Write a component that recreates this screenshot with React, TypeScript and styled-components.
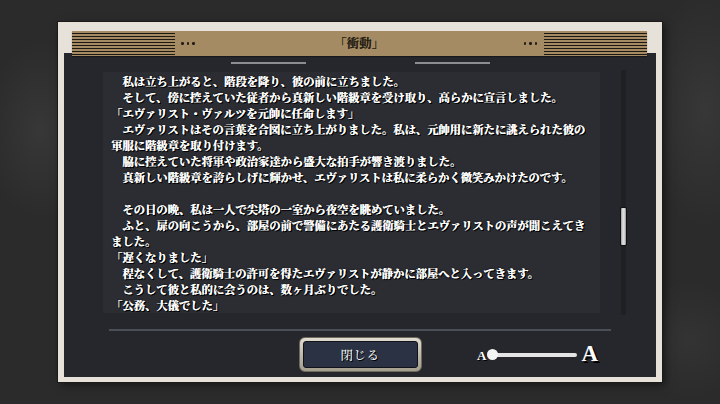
import React from "react";
import styled, { createGlobalStyle } from "styled-components";

const GlobalStyle = createGlobalStyle`
  html, body { margin: 0; padding: 0; width: 720px; height: 404px; overflow: hidden; background: #2a2a2a; }
  #root { width: 720px; height: 404px; }
`;

const jp = `"Noto Serif CJK JP", "Noto Sans CJK JP", "Noto Sans CJK SC", sans-serif`;

const Stage = styled.div`
  width: 720px;
  height: 404px;
  box-sizing: border-box;
  padding: 22px 0 0 58px;
  background:
    radial-gradient(ellipse 55px 90px at 40px 130px, rgba(255,255,255,0.06), transparent),
    radial-gradient(ellipse 60px 120px at 705px 110px, rgba(255,255,255,0.06), transparent),
    radial-gradient(ellipse 60px 60px at 690px 340px, rgba(255,255,255,0.04), transparent),
    #2b2b2b;
`;

const Frame = styled.div`
  width: 604px;
  height: 360px;
  box-sizing: border-box;
  background: #e6e1d9;
  padding: 9px 6px 5px 6px;
  display: flex;
  flex-direction: column;
  box-shadow: 0 0 0 1px #1a1a1a, 3px 3px 8px rgba(0, 0, 0, 0.5);
`;

const HeaderBar = styled.div`
  position: relative;
  z-index: 1;
  margin: 0 9px -3px 8px;
  height: 25px;
  background: #a48b63;
  display: flex;
  align-items: center;
  box-shadow: 0 1px 1px rgba(0, 0, 0, 0.35);
`;

const Stripes = styled.div`
  width: 103px;
  align-self: stretch;
  background: repeating-linear-gradient(to bottom, transparent 0 1.6px, #1d1912 1.6px 3px);
`;

const Dots = styled.div<{ $side: "left" | "right" }>`
  display: flex;
  gap: 3px;
  margin: ${(p) => (p.$side === "left" ? "0 0 0 6px" : "0 7px 0 0")};
`;

const Dot = styled.span`
  width: 2.5px;
  height: 2.5px;
  border-radius: 50%;
  background: #231d13;
`;

const Title = styled.div`
  flex: 1;
  text-align: center;
  font-family: ${jp};
  font-size: 12.5px;
  font-weight: 600;
  color: #241e12;
  line-height: 25px;
  text-shadow: 0.3px 0 0 #241e12;
`;

const Panel = styled.div`
  flex: 1;
  background: #26272c;
  display: flex;
  flex-direction: column;
`;

const Tabs = styled.div`
  display: flex;
  justify-content: center;
  gap: 109px;
  margin-top: 9px;
  height: 2px;
`;

const TabLine = styled.div`
  width: 75px;
  height: 1.5px;
  background: #8b8d90;
`;

const Body = styled.div`
  display: flex;
  align-items: flex-start;
  margin-top: 8px;
  padding-left: 39px;
  height: 241px;
`;

const TextBox = styled.div`
  width: 497px;
  height: 241px;
  box-sizing: border-box;
  background: #2c2d32;
  overflow: hidden;
  padding: 1px 0 0 8px;
  font-family: ${jp};
  font-size: 11.3px;
  font-weight: 700;
  line-height: 16px;
  color: #ffffff;
  white-space: pre;
  text-shadow: 0.4px 0 0 #fff, 1px 1px 0 #000, 1.4px 1px 0 #000, 0 0 2px #000;
`;

const Line = styled.div`
  height: 16px;
`;

const Track = styled.div`
  margin: -2px 0 0 21px;
  width: 5px;
  height: 245px;
  background: #1f2024;
  display: flex;
  flex-direction: column;
`;

const Thumb = styled.div`
  margin-top: 138px;
  height: 37px;
  background: linear-gradient(to right, #9a9a9a, #e2e2e2 40%, #d0d0d0 70%, #8e8e8e);
  box-shadow: 0 0 0 1px #111;
  border-radius: 1px;
`;

const Separator = styled.div`
  margin: 16px 0 0 45px;
  width: 502px;
  height: 2px;
  background: #4a4e56;
`;

const Footer = styled.div`
  margin: 6px 0 0 45px;
  width: 502px;
  height: 35px;
  display: grid;
  grid-template-columns: 1fr auto 1fr;
  align-items: center;
`;

const CloseButton = styled.button`
  grid-column: 2;
  width: 123px;
  height: 35px;
  box-sizing: border-box;
  padding: 3px;
  border: 1px solid #6f6a5e;
  border-radius: 6px;
  background: linear-gradient(to bottom, #e0dccf, #b8b3a3 60%, #a39e8e);
  display: flex;
  cursor: pointer;
`;

const ButtonFace = styled.span`
  flex: 1;
  border: 1px solid #101319;
  border-radius: 3px;
  background: #2a3243;
  display: flex;
  align-items: center;
  justify-content: center;
  font-family: ${jp};
  font-size: 12.5px;
  font-weight: 500;
  color: #f2f2f2;
  letter-spacing: 0.5px;
  text-shadow: 1px 1px 0 #000;
`;

const Slider = styled.div`
  grid-column: 3;
  justify-self: end;
  margin-right: 13px;
  display: flex;
  align-items: center;
`;

const Letter = styled.span<{ $big?: boolean }>`
  font-family: "Liberation Serif", "DejaVu Serif", serif;
  font-weight: 700;
  font-size: ${(p) => (p.$big ? "23px" : "13px")};
  color: #ffffff;
  line-height: 1;
  margin-left: ${(p) => (p.$big ? "4px" : "0")};
  margin-top: ${(p) => (p.$big ? "-3px" : "1px")};
  text-shadow: ${(p) => (p.$big ? "2px 2px 0 #000" : "1px 1px 0 #000")};
`;

const SliderTrack = styled.div`
  width: 90px;
  height: 12px;
  margin-left: 1px;
  display: flex;
  align-items: center;
`;

const Knob = styled.div`
  width: 11px;
  height: 11px;
  border-radius: 50%;
  background: #f4f4f4;
  position: relative;
  z-index: 1;
`;

const Rail = styled.div`
  flex: 1;
  height: 4px;
  margin-left: -3px;
  border-radius: 2px;
  background: #e4e4e4;
`;

const lines = [
  "　私は立ち上がると、階段を降り、彼の前に立ちました。",
  "　そして、傍に控えていた従者から真新しい階級章を受け取り、高らかに宣言しました。",
  "「エヴァリスト・ヴァルツを元帥に任命します」",
  "　エヴァリストはその言葉を合図に立ち上がりました。私は、元帥用に新たに誂えられた彼の",
  "軍服に階級章を取り付けます。",
  "　脇に控えていた将軍や政治家達から盛大な拍手が響き渡りました。",
  "　真新しい階級章を誇らしげに輝かせ、エヴァリストは私に柔らかく微笑みかけたのです。",
  "",
  "　その日の晩、私は一人で尖塔の一室から夜空を眺めていました。",
  "　ふと、扉の向こうから、部屋の前で警備にあたる護衛騎士とエヴァリストの声が聞こえてき",
  "ました。",
  "「遅くなりました」",
  "　程なくして、護衛騎士の許可を得たエヴァリストが静かに部屋へと入ってきます。",
  "　こうして彼と私的に会うのは、数ヶ月ぶりでした。",
  "「公務、大儀でした」",
];

const DotGroup = ({ side }: { side: "left" | "right" }) => (
  <Dots $side={side}>
    <Dot />
    <Dot />
    <Dot />
  </Dots>
);

export default function App() {
  return (
    <>
      <GlobalStyle />
      <Stage>
        <Frame>
          <HeaderBar>
            <Stripes />
            <DotGroup side="left" />
            <Title>「衝動」</Title>
            <DotGroup side="right" />
            <Stripes />
          </HeaderBar>
          <Panel>
            <Tabs>
              <TabLine />
              <TabLine />
            </Tabs>
            <Body>
              <TextBox>
                {lines.map((l, i) => (
                  <Line key={i}>{l}</Line>
                ))}
              </TextBox>
              <Track>
                <Thumb />
              </Track>
            </Body>
            <Separator />
            <Footer>
              <CloseButton>
                <ButtonFace>閉じる</ButtonFace>
              </CloseButton>
              <Slider>
                <Letter>A</Letter>
                <SliderTrack>
                  <Knob />
                  <Rail />
                </SliderTrack>
                <Letter $big>A</Letter>
              </Slider>
            </Footer>
          </Panel>
        </Frame>
      </Stage>
    </>
  );
}
